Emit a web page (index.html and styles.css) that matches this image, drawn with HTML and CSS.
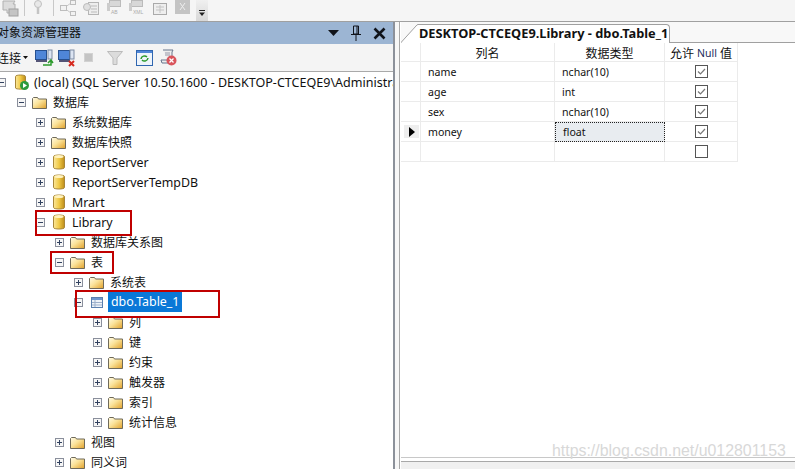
FILE: index.html
```html
<!DOCTYPE html>
<html lang="zh">
<head>
<meta charset="utf-8">
<title>SSMS</title>
<link rel="stylesheet" href="styles.css">
</head>
<body>
<svg class="defs" width="0" height="0">
  <defs>
    <linearGradient id="fg" x1="0" y1="0" x2="1" y2="1"><stop offset="0" stop-color="#fffbe6"/><stop offset=".45" stop-color="#fbe39a"/><stop offset="1" stop-color="#e0a02a"/></linearGradient>
    <linearGradient id="dg" x1="0" y1="0" x2="1" y2="0"><stop offset="0" stop-color="#fbe79a"/><stop offset=".5" stop-color="#f0c945"/><stop offset="1" stop-color="#bd8c1a"/></linearGradient>
    <symbol id="folder" viewBox="0 0 15 13">
      <path d="M.5 12.500V2.500l1-1h4l1 1.500h8v9.500z" fill="url(#fg)" stroke="#6f6a5a"/>
    </symbol>
    <symbol id="db" viewBox="0 0 12 16">
      <path d="M.5 2.500C.5 .5 11.500 .5 11.500 2.500V13.500C11.500 15.500 .5 15.500 .5 13.500z" fill="url(#dg)" stroke="#a8873a"/>
      <ellipse cx="6" cy="2.500" rx="4.500" ry="1.500" fill="#fff2bd"/>
    </symbol>
    <symbol id="plus" viewBox="0 0 9 9">
      <rect x=".5" y=".5" width="8" height="8" fill="#f6f6f6" stroke="#8a8f9c"/><path d="M2 4.500h5M4.500 2v5" stroke="#31415f"/>
    </symbol>
    <symbol id="minus" viewBox="0 0 9 9">
      <rect x=".5" y=".5" width="8" height="8" fill="#f6f6f6" stroke="#8a8f9c"/><path d="M2 4.500h5" stroke="#31415f"/>
    </symbol>
    <symbol id="check" viewBox="0 0 13 13">
      <rect x=".5" y=".5" width="12" height="12" fill="#fff" stroke="#555"/><path d="M3 6.500l2.500 2.500 4.500-5" fill="none" stroke="#777" stroke-width="1.200"/>
    </symbol>
    <symbol id="empty" viewBox="0 0 13 13">
      <rect x=".5" y=".5" width="12" height="12" fill="#fff" stroke="#555"/>
    </symbol>
  </defs>
</svg>

<header class="toolbar">
  <svg class="tb" width="196" height="21" viewBox="0 0 196 21" fill="none">
    <path d="M3 1h12l-2 3h2v9H7v-3H3z" fill="#dcdcdc" stroke="#b0b0b0"/><rect x="9" y="9" width="9" height="7" fill="#c4c4c4" stroke="#a0a0a0"/>
    <path d="M24.500 0v16M53.500 0v16" stroke="#c8c8c8"/>
    <circle cx="38" cy="4" r="3.500" fill="#e8e8e8" stroke="#c0c0c0"/><path d="M38 7v7" stroke="#c4c4c4" stroke-width="2.500"/>
    <path d="M64 8l7-5M64 8l7 5" stroke="#c8c8c8"/><rect x="60.500" y="5.500" width="6" height="5" fill="#f2f2f2" stroke="#bdbdbd"/><rect x="70.500" y=".5" width="5" height="4" fill="#f2f2f2" stroke="#bdbdbd"/><rect x="70.500" y="11.500" width="5" height="4" fill="#f2f2f2" stroke="#bdbdbd"/>
    <rect x="88.500" y="2.500" width="10" height="12" fill="#eee" stroke="#b5b5b5"/><circle cx="87" cy="7" r="3.500" fill="#e0e0e0" stroke="#bbb"/><path d="M91 6h6M91 9h6M91 12h6" stroke="#bbb"/>
    <rect x="109.500" y=".5" width="11" height="6" fill="#d8d8d8" stroke="#bbb"/><path d="M107 3h3v8h-3z" fill="#ccc"/><text x="111" y="14" class="tiny">AB</text>
    <rect x="131.500" y=".5" width="11" height="6" fill="#d8d8d8" stroke="#bbb"/><path d="M129 3h3v8h-3z" fill="#ccc"/><text x="133" y="14" class="tiny">XML</text>
    <rect x="153.500" y="3.500" width="13" height="11" fill="#eee" stroke="#aaa"/><path d="M156 7h8M156 10h8M160 5v8" stroke="#c4c4c4"/>
    <rect x="175" y="0" width="15" height="14" fill="#c4c4c4"/><path d="M180 3l5 7M185 3l-5 7" stroke="#eee"/>
  </svg>
  <div class="chevron"><svg width="8" height="8" viewBox="0 0 8 8"><path d="M1 1.500h6" stroke="#222"/><path d="M1 3.500h6L4 7z" fill="#222"/></svg></div>
</header>

<main class="workspace">
  <section class="explorer">
    <div class="title">
      <span class="title-text">对象资源管理器</span>
      <span class="title-btns">
        <svg width="11" height="6" viewBox="0 0 11 6"><path d="M0 0h11L5.500 6z" fill="#10131a"/></svg>
        <svg width="12" height="16" viewBox="0 0 12 16"><path d="M3.500 1h5v8h-5zM7 1v8M1 9.500h10M6 10v6" fill="none" stroke="#10131a"/></svg>
        <svg width="13" height="13" viewBox="0 0 13 13"><path d="M1.500 1.500l10 10M11.500 1.500l-10 10" stroke="#10131a" stroke-width="2.600"/></svg>
      </span>
    </div>
    <div class="actions">
      <span class="connect">连接</span>
      <svg class="caret" width="5" height="3" viewBox="0 0 5 3"><path d="M0 0h5L2.500 3z" fill="#111"/></svg>
      <svg class="act" width="19" height="18" viewBox="0 0 19 18"><rect x=".5" y="1.500" width="11" height="9" fill="#4f86d8" stroke="#27508f"/><rect x="13" y="1" width="4" height="9" fill="#dbe4f2" stroke="#7d8ba3"/><path d="M1 12h11" stroke="#557" stroke-width="2"/><path d="M8 16h8v-4M13 14l3-3 2 3" fill="none" stroke="#2c9a2c" stroke-width="1.500"/></svg>
      <svg class="act" width="17" height="18" viewBox="0 0 17 18"><rect x=".5" y="1.500" width="11" height="9" fill="#4f86d8" stroke="#27508f"/><rect x="12" y="1" width="4" height="9" fill="#dbe4f2" stroke="#7d8ba3"/><path d="M1 12h11" stroke="#557" stroke-width="2"/><path d="M11 12l5 5M16 12l-5 5" stroke="#d62a1f" stroke-width="2"/></svg>
      <svg class="act" width="10" height="10" viewBox="0 0 10 10"><rect x=".5" y=".5" width="8" height="8" fill="#c4c4c4" stroke="#d2d2d2"/></svg>
      <svg class="act" width="16" height="14" viewBox="0 0 16 14"><path d="M.5 .5h15L10 7v6.500H6V7z" fill="#dcdcdc" stroke="#bbb"/></svg>
      <svg class="act" width="17" height="16" viewBox="0 0 17 16"><rect x=".5" y=".5" width="16" height="15" fill="#eef4fb" stroke="#2f66b0"/><rect x="1" y="1" width="15" height="2" fill="#4f86d8"/><path d="M5 9a3.500 3.500 0 0 1 6-2M12 8a3.500 3.500 0 0 1-6 2" fill="none" stroke="#2a9a2a" stroke-width="1.500"/></svg>
      <svg class="act" width="17" height="17" viewBox="0 0 17 17"><path d="M3 1h10l-1 2v8H1l1 3h7" fill="#eee" stroke="#66758c"/><path d="M5 4h5M5 6h5" stroke="#99a"/><circle cx="11.500" cy="11.500" r="5" fill="#d9545c"/><path d="M9.500 9.500l4 4M13.500 9.500l-4 4" stroke="#fff" stroke-width="1.300"/></svg>
    </div>
    <ul class="tree">
      <li class="node l0"><svg class="exp"><use href="#minus"/></svg><svg class="ic-server" width="14" height="16" viewBox="0 0 14 16"><path d="M.5 2.500C.5 .5 10.500 .5 10.500 2.500V14C10.500 15.500 .5 15.500 .5 14z" fill="url(#dg)" stroke="#a8873a"/><circle cx="9.500" cy="11.500" r="4.500" fill="#2d9a3c"/><path d="M8 9l4 2.500L8 14z" fill="#fff"/></svg><span class="lat wide">(local) (SQL Server 10.50.1600 - DESKTOP-CTCEQE9\Administrator)</span></li>
      <li class="node l1"><svg class="exp"><use href="#minus"/></svg><svg class="ic"><use href="#folder"/></svg><span>数据库</span></li>
      <li class="node l2"><svg class="exp"><use href="#plus"/></svg><svg class="ic"><use href="#folder"/></svg><span>系统数据库</span></li>
      <li class="node l2"><svg class="exp"><use href="#plus"/></svg><svg class="ic"><use href="#folder"/></svg><span>数据库快照</span></li>
      <li class="node l2"><svg class="exp"><use href="#plus"/></svg><svg class="ic-db"><use href="#db"/></svg><span class="lat">ReportServer</span></li>
      <li class="node l2"><svg class="exp"><use href="#plus"/></svg><svg class="ic-db"><use href="#db"/></svg><span class="lat">ReportServerTempDB</span></li>
      <li class="node l2"><svg class="exp"><use href="#plus"/></svg><svg class="ic-db"><use href="#db"/></svg><span class="lat">Mrart</span></li>
      <li class="node l2"><svg class="exp"><use href="#minus"/></svg><svg class="ic-db"><use href="#db"/></svg><span class="lat">Library</span></li>
      <li class="node l3"><svg class="exp"><use href="#plus"/></svg><svg class="ic"><use href="#folder"/></svg><span>数据库关系图</span></li>
      <li class="node l3"><svg class="exp"><use href="#minus"/></svg><svg class="ic"><use href="#folder"/></svg><span>表</span></li>
      <li class="node l4"><svg class="exp"><use href="#plus"/></svg><svg class="ic"><use href="#folder"/></svg><span>系统表</span></li>
      <li class="node l4"><svg class="exp"><use href="#minus"/></svg><svg class="ic-table" width="12" height="11" viewBox="0 0 12 11"><rect x=".5" y=".5" width="11" height="10" fill="#eef2f8" stroke="#5b7fae"/><rect x="1" y="1" width="10" height="2" fill="#6f97cf"/><path d="M4 3v7M1 5.500h10M1 8h10" stroke="#9db0cb"/></svg><span class="lat selected">dbo.Table_1</span></li>
      <li class="node l5"><svg class="exp"><use href="#plus"/></svg><svg class="ic"><use href="#folder"/></svg><span>列</span></li>
      <li class="node l5"><svg class="exp"><use href="#plus"/></svg><svg class="ic"><use href="#folder"/></svg><span>键</span></li>
      <li class="node l5"><svg class="exp"><use href="#plus"/></svg><svg class="ic"><use href="#folder"/></svg><span>约束</span></li>
      <li class="node l5"><svg class="exp"><use href="#plus"/></svg><svg class="ic"><use href="#folder"/></svg><span>触发器</span></li>
      <li class="node l5"><svg class="exp"><use href="#plus"/></svg><svg class="ic"><use href="#folder"/></svg><span>索引</span></li>
      <li class="node l5"><svg class="exp"><use href="#plus"/></svg><svg class="ic"><use href="#folder"/></svg><span>统计信息</span></li>
      <li class="node l3"><svg class="exp"><use href="#plus"/></svg><svg class="ic"><use href="#folder"/></svg><span>视图</span></li>
      <li class="node l3"><svg class="exp"><use href="#plus"/></svg><svg class="ic"><use href="#folder"/></svg><span>同义词</span></li>
    </ul>
  </section>

  <section class="designer">
    <div class="tabs">
      <svg class="slant" width="17" height="19" viewBox="0 0 17 19"><path d="M0 19L15 2q1-1.500 2-1.500V19z" fill="#fff"/><path d="M0 18.500L15 2q1-1.500 2-1.500" fill="none" stroke="#a0a0a0"/></svg>
      <div class="tab">DESKTOP-CTCEQE9.Library - dbo.Table_1</div>
    </div>
    <div class="grid">
      <div class="cell handle head"></div><div class="cell head center">列名</div><div class="cell head center">数据类型</div><div class="cell head center">允许&nbsp;<span class="null">Null</span>&nbsp;值</div>

      <div class="cell handle"></div><div class="cell">name</div><div class="cell">nchar(10)</div><div class="cell center"><svg class="box"><use href="#check"/></svg></div>
      <div class="cell handle"></div><div class="cell">age</div><div class="cell">int</div><div class="cell center"><svg class="box"><use href="#check"/></svg></div>
      <div class="cell handle"></div><div class="cell">sex</div><div class="cell">nchar(10)</div><div class="cell center"><svg class="box"><use href="#check"/></svg></div>
      <div class="cell handle"><span class="arrow"><svg width="6" height="10" viewBox="0 0 6 10"><path d="M0 0l6 5-6 5z" fill="#000"/></svg></span></div><div class="cell">money</div><div class="cell active">float</div><div class="cell center"><svg class="box"><use href="#check"/></svg></div>
      <div class="cell handle"></div><div class="cell"></div><div class="cell"></div><div class="cell center"><svg class="box"><use href="#empty"/></svg></div>
    </div>
    <div class="statusline"></div>
  </section>
</main>

<div class="mark m-library"></div>
<div class="mark m-table"></div>
<div class="mark m-dbo"></div>
<div class="watermark">https://blog.csdn.net/u012801153</div>
</body>
</html>
```
FILE: styles.css
```css
* { box-sizing: border-box; }
html, body { margin: 0; padding: 0; height: 100%; overflow: hidden; }
body {
  width: 795px; height: 469px; position: relative; background: #fff; color: #111;
  font: 12px "Noto Sans", "Noto Sans CJK SC", sans-serif;
  display: flex; flex-direction: column;
}
.defs { position: absolute; }
.tiny { font: 5px "Liberation Sans", sans-serif; fill: #aaa; }
.toolbar { height: 21px; flex: none; background: #f5f5f5; display: flex; }
.tb { flex: none; }
.chevron {
  width: 12px; height: 21px; background: linear-gradient(#f0f0f0, #d8d8d8);
  display: flex; align-items: flex-end; justify-content: center; padding-bottom: 4px;
}
.workspace { flex: 1; display: flex; min-height: 0; border-top: 1px solid #a0a0a0; background: #f7f7f7; }
.explorer {
  width: 395px; flex: none; margin-right: 4px; display: flex; flex-direction: column; overflow: hidden;
  border-right: 2px solid #8c919a; background: #fff;
}
.title {
  height: 22px; flex: none; background: #9cb5d3; display: flex; align-items: center;
  justify-content: space-between; padding-right: 7px;
}
.title-text { margin-left: -3px; line-height: 22px; }
.title-btns { display: flex; align-items: center; gap: 11px; }
.actions {
  height: 28px; flex: none; background: #f4f4f4; border-bottom: 1px solid #a9a9a9;
  display: flex; align-items: center;
}
.connect { margin-left: -3px; }
.caret { margin-left: 2px; }
.act { flex: none; }
.actions .act:nth-of-type(2) { margin-left: 7px; }
.actions .act:nth-of-type(3) { margin-left: 4px; }
.actions .act:nth-of-type(4) { margin-left: 9px; }
.actions .act:nth-of-type(5) { margin-left: 13px; }
.actions .act:nth-of-type(6) { margin-left: 13px; }
.actions .act:nth-of-type(7) { margin-left: 7px; }
.tree { list-style: none; margin: 0; padding: 0; flex: 1; overflow: hidden; }
.node { height: 20px; display: flex; align-items: center; white-space: nowrap; }
.node span { margin-left: 6px; }
.lat { font-size: 12.400px; }
.exp { width: 9px; height: 9px; flex: none; margin-right: 6px; }
.ic { width: 15px; height: 13px; flex: none; }
.ic-db { width: 12px; height: 16px; flex: none; margin: 0 1px 0 2px; }
.ic-server { flex: none; margin-left: 3px; }
.ic-table { flex: none; margin-left: 2px; }
.l0 { margin-left: -3px; }
.node .wide { margin-left: 5px; flex: none; font-size: 12.550px; }
.l1 { padding-left: 17px; }
.l2 { padding-left: 36px; }
.l3 { padding-left: 55px; }
.l4 { padding-left: 74px; }
.l5 { padding-left: 93px; }
.node .selected { background: #0a78d7; color: #fff; height: 20px; line-height: 20px; padding: 0 3px; margin-left: 5px; }
.designer {
  flex: 1; min-width: 0; display: flex; flex-direction: column; position: relative;
  border-left: 1px solid #a8a8a8; padding-left: 1px; background: #fff;
}
.tabs { height: 21px; flex: none; background: #f8f8f8; box-shadow: inset 0 -1px 0 #a0a0a0; display: flex; align-items: flex-end; }
.slant { flex: none; }
.tab {
  height: 19px; padding-left: 1px; background: #fff; border: 1px solid #a0a0a0; border-bottom: none; border-left: none;
  border-radius: 0 4px 0 0; font-weight: 700; font-size: 12.800px; line-height: 17px; white-space: nowrap; width: 252px; overflow: hidden;
}
.grid {
  display: grid; grid-template-columns: 20px 134px 110px 73px; grid-template-rows: 19px; grid-auto-rows: 20px; flex: none; width: 337px;
}
.cell {
  display: flex; align-items: center; padding-left: 7px; font-size: 10.600px;
  border-right: 1px solid #ebebeb; border-bottom: 1px solid #ebebeb; white-space: nowrap;
}
.head { font-size: 12px; padding-top: 1px; }
.null { font-size: 10.500px; color: #1c2a5c; }
.center { justify-content: center; padding-left: 0; }
.handle { padding-left: 3px; }
.arrow { width: 15px; height: 13px; background: #eee; display: flex; align-items: center; justify-content: center; }
.active { background: #e8ecf0; outline: 1px dotted #222; outline-offset: -1px; padding-left: 8px; }
.box { width: 13px; height: 13px; }
.statusline { margin-top: auto; height: 12px; flex: none; border-top: 1px solid #c8c8c8; background: #f0f0f0; box-shadow: inset 0 3px 0 #fff, inset 0 4px 0 #a8a8a8; }
.mark { position: absolute; border: 2px solid #c00000; pointer-events: none; }
.m-library { left: 35px; top: 210px; width: 97px; height: 26px; }
.m-table { left: 50px; top: 251px; width: 64px; height: 23px; }
.m-dbo { left: 75px; top: 290px; width: 145px; height: 28px; }
.watermark { position: absolute; left: 552px; top: 442px; font: 15.900px "Liberation Sans", sans-serif; color: #d8d8d8; }
```
